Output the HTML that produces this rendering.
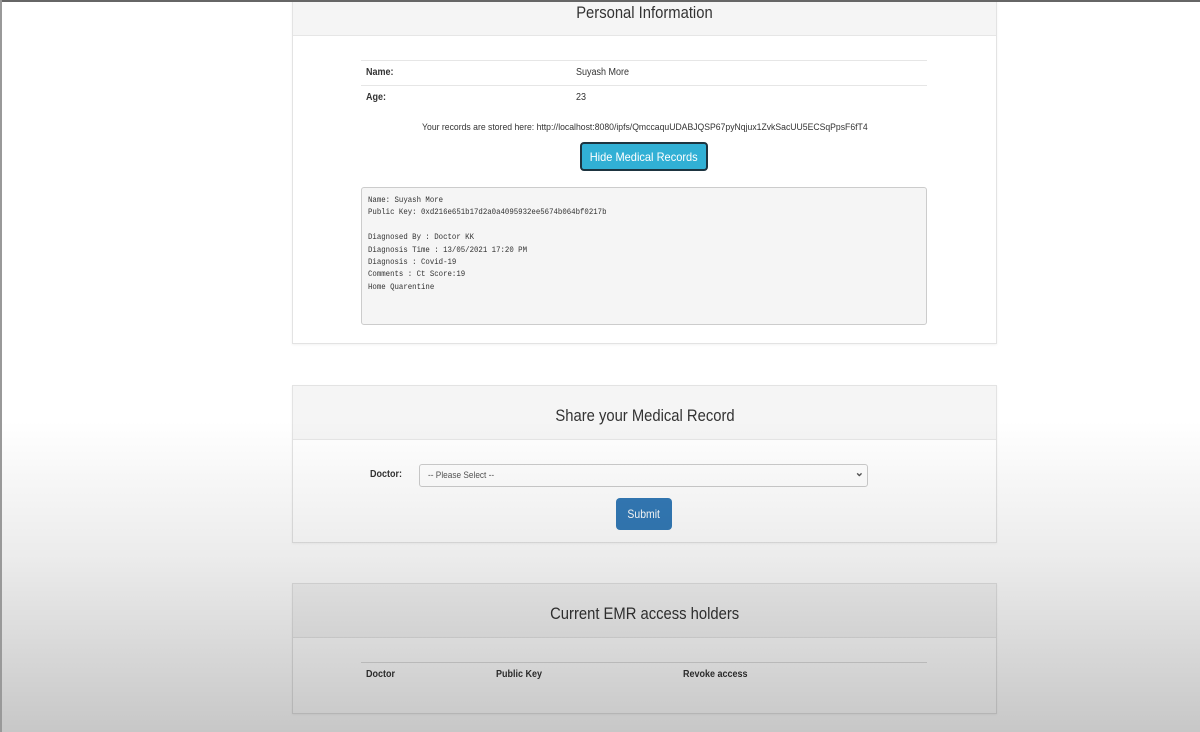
<!DOCTYPE html>
<html><head><style>
body{margin:0;width:1200px;height:732px;overflow:hidden;background:#fff;font-family:"Liberation Sans",sans-serif;color:#333;position:relative}
.top{position:absolute;left:0;top:0;width:1200px;height:2px;background:#666}
.lft{position:absolute;left:0;top:0;width:2px;height:732px;background:#999}
.panel{position:absolute;left:292px;width:703px;border:1px solid #e3e3e3;background:#fff;box-shadow:0 1px 2px rgba(0,0,0,.05)}
.hd{background:#f5f5f5;border-bottom:1px solid #e6e6e6;text-align:center;font-size:17px;color:#333}
.sx{display:inline-block;transform:scaleX(.87)}
.row{position:absolute;left:68px;width:566px;border-top:1px solid #e6e6e6;font-size:10px;height:24px;line-height:24px}
.row b{position:absolute;left:5px;transform:scaleX(.9);transform-origin:left}
.row span{position:absolute;left:215px;transform:scaleX(.9);transform-origin:left}
pre{margin:0;font-family:"Liberation Mono",monospace;font-size:8px;line-height:12.4px;color:#333;transform:scaleX(.92);transform-origin:left}
.ov{position:absolute;left:0;top:0;width:1200px;height:732px;background:linear-gradient(to bottom,rgba(0,0,0,0) 0,rgba(0,0,0,0) 420px,rgba(0,0,0,.08) 560px,rgba(0,0,0,.22) 732px);pointer-events:none}
.lb{position:absolute;font-size:10px;font-weight:bold;transform:scaleX(.9);transform-origin:left}
</style></head><body>
<div class="panel" style="top:-1px;height:343px">
 <div class="hd" style="height:35px;line-height:26px"><span class="sx">Personal Information</span></div>
 <div class="row" style="top:60px"><b>Name:</b><span>Suyash More</span></div>
 <div class="row" style="top:85px"><b>Age:</b><span>23</span></div>
 <div style="position:absolute;top:122px;left:0;width:703px;text-align:center;font-size:9.5px"><span class="sx" style="transform:scaleX(.91)">Your records are stored here: http://localhost:8080/ipfs/QmccaquUDABJQSP67pyNqjux1ZvkSacUU5ECSqPpsF6fT4</span></div>
 <div style="position:absolute;left:287px;top:142px;width:128px;height:29px;background:#31b0d5;border:2px solid #1d3440;border-radius:4px;color:#fff;font-size:12px;line-height:27px;text-align:center;box-sizing:border-box"><span class="sx" style="transform:scaleX(.92)">Hide Medical Records</span></div>
 <div style="position:absolute;left:68px;top:187px;width:566px;height:138px;background:#f5f5f5;border:1px solid #ccc;border-radius:3px;box-sizing:border-box;padding:7px 6px"><pre>Name: Suyash More
Public Key: 0xd216e651b17d2a0a4095932ee5674b064bf0217b

Diagnosed By : Doctor KK
Diagnosis Time : 13/05/2021 17:20 PM
Diagnosis : Covid-19
Comments : Ct Score:19
Home Quarentine</pre></div>
</div>
<div class="panel" style="top:385px;height:156px">
 <div class="hd" style="height:53px;line-height:60px"><span class="sx">Share your Medical Record</span></div>
 <div class="lb" style="left:77px;top:83px">Doctor:</div>
 <div style="position:absolute;left:126px;top:78px;width:449px;height:23px;border:1px solid #ccc;border-radius:3px;box-sizing:border-box;font-size:9.5px;line-height:21px;padding-left:8px;color:#555;background:#fff"><span class="sx" style="transform-origin:left">-- Please Select --</span><span style="position:absolute;right:3px;top:-2px;font-size:11px;font-weight:bold">&#8964;</span></div>
 <div style="position:absolute;left:323px;top:112px;width:56px;height:32px;background:#337ab7;border-radius:4px;color:#fff;font-size:12px;line-height:32px;text-align:center"><span class="sx">Submit</span></div>
</div>
<div class="panel" style="top:583px;height:129px">
 <div class="hd" style="height:53px;line-height:60px"><span class="sx">Current EMR access holders</span></div>
 <div style="position:absolute;left:68px;top:78px;width:566px;border-top:1px solid #ddd"></div>
 <div class="lb" style="left:73px;top:85px">Doctor</div>
 <div class="lb" style="left:203px;top:85px">Public Key</div>
 <div class="lb" style="left:390px;top:85px">Revoke access</div>
</div>
<div class="ov"></div>
<div class="top"></div><div class="lft"></div>
</body></html>
